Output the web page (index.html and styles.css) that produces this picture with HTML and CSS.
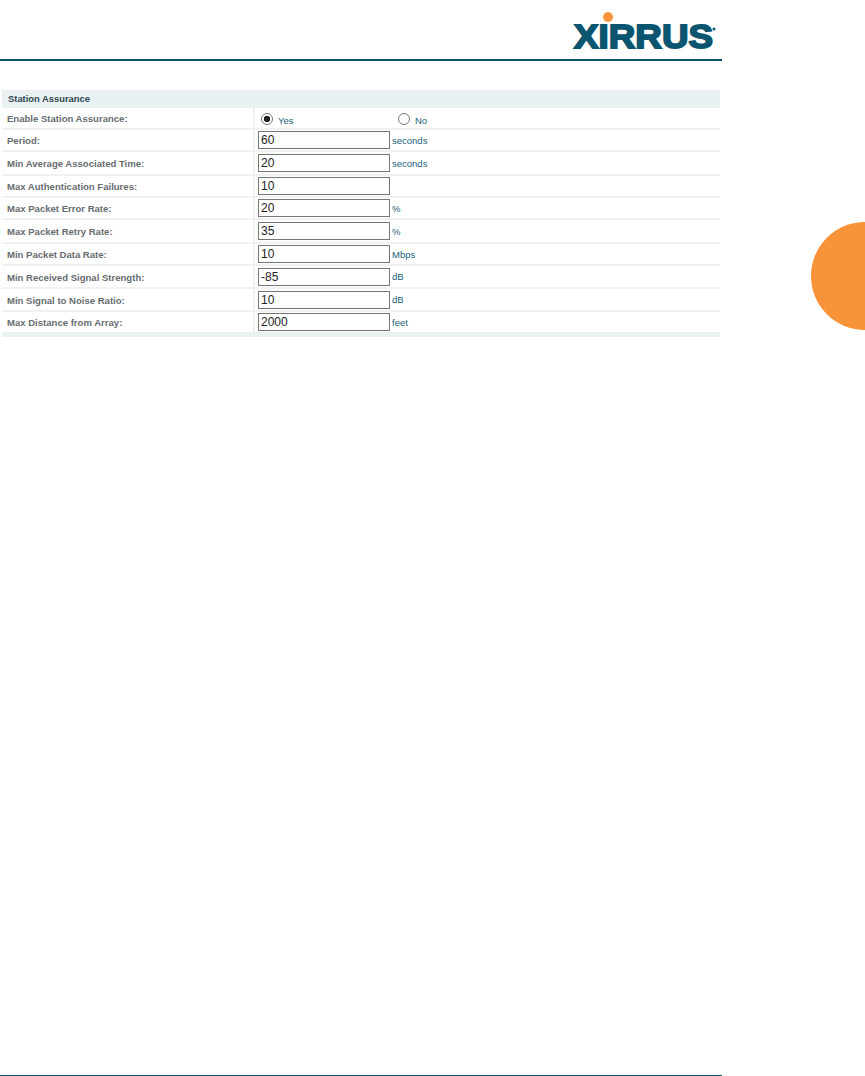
FILE: index.html
```html
<!DOCTYPE html>
<html lang="en">
<head>
    <meta charset="UTF-8">
    <meta name="viewport" content="width=device-width, initial-scale=1.0">
    <title>Station Assurance</title>
    <link rel="stylesheet" href="styles.css">
</head>
<body>
    <div class="page">
        <header class="page-header">
            <svg class="logo" width="150" height="44" viewBox="0 0 150 44" aria-label="Xirrus">
                <circle cx="42" cy="7" r="5" fill="#f9933a"/>
                <text class="logo-word" x="8" y="38" textLength="139" lengthAdjust="spacingAndGlyphs">XIRRUS</text>
                <circle cx="148" cy="19" r="1.500" fill="#0b5570"/>
            </svg>
        </header>

        <table class="settings">
            <colgroup>
                <col class="col-name">
                <col>
            </colgroup>
            <thead>
                <tr class="head-row"><th colspan="2">Station Assurance</th></tr>
            </thead>
            <tbody>
                <tr class="row-radio">
                    <td class="name">Enable Station Assurance:</td>
                    <td class="value">
                        <div class="radios">
                            <label class="radio-item"><input type="radio" name="enable" checked><span>Yes</span></label>
                            <label class="radio-item"><input type="radio" name="enable"><span>No</span></label>
                        </div>
                    </td>
                </tr>
                <tr class="h22"><td class="name">Period:</td><td class="value"><input type="text" value="60"><span class="unit">seconds</span></td></tr>
                <tr class="h24"><td class="name">Min Average Associated Time:</td><td class="value"><input type="text" value="20"><span class="unit">seconds</span></td></tr>
                <tr class="h22"><td class="name">Max Authentication Failures:</td><td class="value"><input type="text" value="10"></td></tr>
                <tr class="h22"><td class="name">Max Packet Error Rate:</td><td class="value"><input type="text" value="20"><span class="unit">%</span></td></tr>
                <tr class="h24"><td class="name">Max Packet Retry Rate:</td><td class="value"><input type="text" value="35"><span class="unit">%</span></td></tr>
                <tr class="h22"><td class="name">Min Packet Data Rate:</td><td class="value"><input type="text" value="10"><span class="unit">Mbps</span></td></tr>
                <tr class="h23"><td class="name">Min Received Signal Strength:</td><td class="value"><input type="text" value="-85"><span class="unit">dB</span></td></tr>
                <tr class="h23"><td class="name">Min Signal to Noise Ratio:</td><td class="value"><input type="text" value="10"><span class="unit">dB</span></td></tr>
                <tr class="h21 last"><td class="name">Max Distance from Array:</td><td class="value"><input type="text" value="2000"><span class="unit">feet</span></td></tr>
            </tbody>
        </table>
        <div class="table-foot"></div>

        <div class="page-footer"></div>
    </div>

    <div class="chapter-tab"></div>
</body>
</html>
```

FILE: styles.css
```css
* {
    margin: 0;
    padding: 0;
    box-sizing: border-box;
}

html, body {
    height: 100%;
    overflow: hidden;
}

body {
    background: #fff;
    font-family: 'Liberation Sans', Arial, sans-serif;
}

.page {
    width: 722px;
    height: 1076px;
    display: flex;
    flex-direction: column;
}

.page-header {
    height: 61px;
    border-bottom: 2px solid #0b5570;
    display: flex;
    justify-content: flex-end;
    padding: 10px 6px 0 0;
    margin-bottom: 29px;
}

.logo-word {
    font-family: 'Liberation Sans', Arial, sans-serif;
    font-weight: bold;
    font-size: 33.500px;
    fill: #0b5570;
    stroke: #0b5570;
    stroke-width: 1.800px;
}

.settings {
    width: 718px;
    margin-left: 2px;
    border-collapse: collapse;
    table-layout: fixed;
}

.col-name {
    width: 252px;
}

.head-row th {
    height: 18px;
    background: #e9f1f3;
    color: #2f4650;
    font-size: 9.400px;
    font-weight: bold;
    text-align: left;
    padding: 0 0 1px 6px;
}

tbody tr {
    border-bottom: 2px solid #f0f1f1;
}

tbody tr.last {
    border-bottom: none;
}

.row-radio { height: 21px; }
.h21 { height: 21px; }
.h22 { height: 22px; }
.h23 { height: 23px; }
.h24 { height: 24px; }

.name {
    border-right: 2px solid #f0f1f1;
    padding: 1px 0 0 5px;
    color: #666c70;
    font-size: 9.550px;
    font-weight: bold;
}

.value {
    padding-left: 3px;
    font-size: 0;
}

.value input[type="text"] {
    width: 132px;
    height: 18px;
    border: 1.500px solid #767676;
    padding-left: 2px;
    font-family: 'Liberation Sans', Arial, sans-serif;
    font-size: 12px;
    color: #222;
    vertical-align: middle;
    outline: none;
}

.unit {
    margin-left: 2px;
    color: #1a5f7a;
    font-size: 9.500px;
    vertical-align: middle;
}

.radios {
    display: flex;
    padding: 2px 0 0 3px;
}

.radio-item {
    width: 137px;
    display: flex;
    align-items: center;
    gap: 5px;
    color: #1a5f7a;
    font-size: 9.500px;
}

.radio-item input {
    appearance: none;
    width: 12px;
    height: 12px;
    border: 1px solid #767676;
    border-radius: 50%;
    background: #fff;
}

.radio-item input:checked {
    background: radial-gradient(circle, #222 0, #222 3px, #fff 3.500px);
}

.radio-item span {
    padding-top: 3px;
}

.table-foot {
    width: 718px;
    height: 5px;
    margin-left: 2px;
    background: #e9f1f3;
}

.page-footer {
    margin-top: auto;
    height: 1px;
    background: #0b5570;
}

/* orange half circle on the page edge */
.chapter-tab {
    position: absolute;
    left: 811px;
    top: 222px;
    width: 54px;
    height: 108px;
    border-radius: 54px 0 0 54px;
    background: #f9933a;
}
```
